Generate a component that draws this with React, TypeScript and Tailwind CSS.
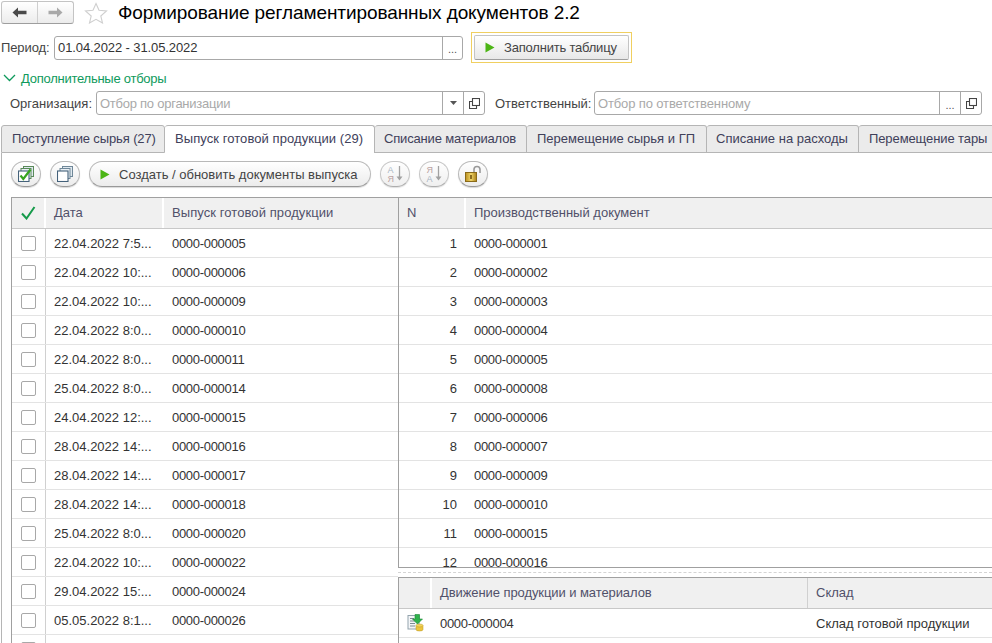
import React from "react";

const leftRows = [
  ["22.04.2022 7:5...", "0000-000005"],
  ["22.04.2022 10:...", "0000-000006"],
  ["22.04.2022 10:...", "0000-000009"],
  ["22.04.2022 8:0...", "0000-000010"],
  ["22.04.2022 8:0...", "0000-000011"],
  ["25.04.2022 8:0...", "0000-000014"],
  ["24.04.2022 12:...", "0000-000015"],
  ["28.04.2022 14:...", "0000-000016"],
  ["28.04.2022 14:...", "0000-000017"],
  ["28.04.2022 14:...", "0000-000018"],
  ["25.04.2022 8:0...", "0000-000020"],
  ["22.04.2022 10:...", "0000-000022"],
  ["29.04.2022 15:...", "0000-000024"],
  ["05.05.2022 8:1...", "0000-000026"],
  ["", ""],
];
const rightRows = ["000001","000002","000003","000004","000005","000008","000006","000007","000009","000010","000015","000016"];

function Copy() {
  return (
    <svg width="11" height="11" viewBox="0 0 11 11" fill="none" stroke="#444" strokeWidth="1.1">
      <rect x="3.500" y="0.500" width="7" height="7" fill="#fff" />
      <path d="M3.500 3.500H0.500V10.500H7.500V7.500" />
    </svg>
  );
}

function Seg({ children, w }: { children: React.ReactNode; w: string }) {
  return <div className={`${w} h-full border-l border-[#a8a8a8] flex items-center justify-center shrink-0`}>{children}</div>;
}

function Dots() {
  return <span className="text-[#555] text-[11px] leading-none relative top-[2px]">...</span>;
}

function Play() {
  return (
    <svg width="10" height="11" viewBox="0 0 10 11" className="shrink-0"><path d="M0.500 0.500 9.500 5.500 0.500 10.500z" fill="#4cb515" /></svg>
  );
}

function Round({ className = "", children }: { className?: string; children?: React.ReactNode }) {
  return (
    <div className={`w-[30px] h-[26px] rounded-full border border-[#b9b9b9] border-b-[#999] bg-gradient-to-b from-white to-[#ececec] shadow-[0_1px_1px_rgba(0,0,0,0.15)] flex items-center justify-center shrink-0 ${className}`}>
      {children}
    </div>
  );
}

function Stack({ check = false }: { check?: boolean }) {
  return (
    <svg width="16" height="16" viewBox="0 0 16 16" fill="none">
      <rect x="5.500" y="0.500" width="10" height="10" fill="#dfe8ef" stroke={check ? "#5a8a5a" : "#6f8798"} />
      <rect x="3" y="2.500" width="10" height="10" fill="#e9eff4" stroke={check ? "#5a8a5a" : "#6f8798"} />
      <rect x="0.500" y="5" width="10.500" height="10.500" fill="#fff" stroke="#44617a" strokeWidth="1.100" />
      {check && <path d="M2.500 9.500 5.300 13 12.500 3.500" stroke="#36a51f" strokeWidth="2.200" />}
    </svg>
  );
}

function Sort({ flip = false }: { flip?: boolean }) {
  const pink = "#a98a8a";
  const blue = "#94a3b3";
  return (
    <svg width="19" height="18" viewBox="0 0 19 18" fill="none">
      <text x="1.500" y="8" fontSize="9" fontFamily="Liberation Sans, sans-serif" fill={flip ? pink : blue}>{flip ? "Я" : "А"}</text>
      <text x="1.500" y="16.500" fontSize="9" fontFamily="Liberation Sans, sans-serif" fill={flip ? blue : pink}>{flip ? "А" : "Я"}</text>
      <path d="M13.500 1V12" stroke="#8a8a8a" strokeWidth="1.300" />
      <path d="M10.500 11.500H16.500L13.500 15.500z" fill="#8a8a8a" />
    </svg>
  );
}

function Lock() {
  return (
    <svg width="20" height="20" viewBox="0 0 20 20" fill="none">
      <path d="M11 9V5.500Q11 2.500 14 2.500T17 5.500V9" stroke="#9a9a9a" strokeWidth="1.600" />
      <defs>
        <linearGradient id="lk" x1="0" x2="1" y1="0" y2="0">
          <stop offset="0" stopColor="#b98f1f" />
          <stop offset="0.500" stopColor="#f2d76a" />
          <stop offset="1" stopColor="#a9801a" />
        </linearGradient>
      </defs>
      <rect x="2.500" y="8.500" width="11" height="9" fill="url(#lk)" stroke="#8a6a18" />
      <rect x="7" y="11" width="2" height="4" fill="#8a6c20" />
    </svg>
  );
}

function DocIcon() {
  return (
    <svg width="17" height="18" viewBox="0 0 17 18" fill="none">
      <rect x="1" y="1.500" width="11" height="13.500" fill="#f4f6f8" stroke="#93a3ad" />
      <path d="M3 4.500H7M3 7H8M3 9.500H8M3 12H8" stroke="#7b8b95" />
      <path d="M8 0.500H12.500V5H15.500L10.500 10 5.500 5H8z" fill="#2fb24c" stroke="#1d8a35" strokeWidth="0.600" />
      <path d="M9 11.500V15.500Q9 17 12.500 17T16 15.500V11.500z" fill="#ecc53d" stroke="#b8962a" strokeWidth="0.500" />
      <ellipse cx="12.500" cy="11.500" rx="3.500" ry="1.500" fill="#f3d35a" stroke="#b8962a" strokeWidth="0.500" />
    </svg>
  );
}

const tabs = [
  { t: "Поступление сырья (27)", w: "w-[164px]", p: "pl-[10px] tracking-[-0.12px]" },
  { t: "Выпуск готовой продукции (29)", w: "w-[210px]", p: "pl-[10px] tracking-[0.07px]", active: true },
  { t: "Списание материалов", w: "w-[152px]", p: "pl-[9px] tracking-[-0.17px]" },
  { t: "Перемещение сырья и ГП", w: "w-[180px]", p: "pl-[10px]" },
  { t: "Списание на расходы", w: "w-[152px]", p: "pl-[9px]" },
  { t: "Перемещение тары", w: "w-[140px]", p: "pl-[10px] tracking-[-0.1px]" },
];

export default function App() {
  return (
    <div className="w-[992px] h-[643px] overflow-hidden bg-white font-['Liberation_Sans',Arial,sans-serif] text-[13px] text-[#3a3a3a] leading-none">
      {/* title */}
      <div className="flex items-center h-[23px] mt-[1px] pl-[1px]">
        <div className="w-[73px] h-[23px] flex rounded-[3px] border border-[#c4c4c4] border-b-[#9e9e9e] bg-gradient-to-b from-white to-[#ececec] shrink-0">
          <div className="w-[36px] flex items-center justify-center border-r border-[#cfcfcf]">
            <svg width="15" height="11" viewBox="0 0 15 11"><path d="M0.500 5.500 6 0.500V3.800H14.500V7.200H6V10.500z" fill="#4a4a4a" /></svg>
          </div>
          <div className="flex-1 flex items-center justify-center">
            <svg width="15" height="11" viewBox="0 0 15 11"><path d="M14.500 5.500 9 0.500V3.800H0.500V7.200H9V10.500z" fill="#a9a9a9" /></svg>
          </div>
        </div>
        <svg className="ml-[10px] shrink-0" width="24" height="22" viewBox="0 0 24 22" fill="none">
          <path d="M12 1.500 15 8.300 22.500 9 16.800 14 18.500 21 12 17.300 5.500 21 7.200 14 1.500 9 9 8.300z" stroke="#cfcfcf" strokeWidth="1.100" fill="#fff" />
        </svg>
        <h1 className="ml-[10px] text-[19px] tracking-[-0.09px] font-normal text-black whitespace-nowrap leading-none">Формирование регламентированных документов 2.2</h1>
      </div>

      {/* period */}
      <div className="flex items-center h-[31px] mt-[8px] pl-[1px]">
        <span className="w-[53px] shrink-0 text-[#444] tracking-[-0.1px]">Период:</span>
        <div className="w-[409px] h-[24px] flex border border-[#a8a8a8] rounded-[3px] shrink-0">
          <div className="flex-1 flex items-center pl-[3px] pb-[1px] text-[#333] tracking-[-0.1px]">01.04.2022 - 31.05.2022</div>
          <Seg w="w-[20px]"><Dots /></Seg>
        </div>
        <div className="ml-[8px] w-[161px] h-[31px] border border-[#f0cf60] p-[2px] shrink-0">
          <div className="h-full rounded-[2px] border border-[#c4c4c4] border-b-[#9e9e9e] bg-gradient-to-b from-white to-[#e8e8e8] flex items-center pl-[10px]">
            <Play />
            <span className="ml-[9px] text-[#444] tracking-[-0.2px]">Заполнить таблицу</span>
          </div>
        </div>
      </div>

      {/* filters header */}
      <div className="flex items-center h-[14px] mt-[8px] pl-[3px] text-[#0e9a5c]">
        <svg width="13" height="8" viewBox="0 0 13 8" fill="none"><path d="M1 1 6.500 6.500 12 1" stroke="#0e9a5c" strokeWidth="1.300" /></svg>
        <span className="ml-[5px] tracking-[-0.25px]">Дополнительные отборы</span>
      </div>

      {/* filters */}
      <div className="flex items-center h-[24px] mt-[6px] pl-[10px]">
        <span className="w-[86px] shrink-0 text-[#444]">Организация:</span>
        <div className="w-[389px] h-full flex border border-[#a8a8a8] rounded-[3px] shrink-0">
          <div className="flex-1 flex items-center pl-[3px] text-[#a9a9a9] tracking-[-0.25px]">Отбор по организации</div>
          <Seg w="w-[21px]"><svg width="7" height="4" viewBox="0 0 7 4"><path d="M0 0H7L3.500 4z" fill="#555" /></svg></Seg>
          <Seg w="w-[21px]"><Copy /></Seg>
        </div>
        <span className="ml-[10px] w-[99px] shrink-0 text-[#444]">Ответственный:</span>
        <div className="w-[388px] h-full flex border border-[#a8a8a8] rounded-[3px] shrink-0">
          <div className="flex-1 flex items-center pl-[3px] text-[#a9a9a9] tracking-[-0.13px]">Отбор по ответственному</div>
          <Seg w="w-[21px]"><Dots /></Seg>
          <Seg w="w-[21px]"><Copy /></Seg>
        </div>
      </div>

      {/* tabs */}
      <div className="flex h-[28px] mt-[10px] pl-[1px] w-[1050px]">
        {tabs.map((t) => (
          <div
            key={t.t}
            className={`${t.w} ${t.p} pb-[2px] shrink-0 flex items-center whitespace-nowrap border-t border-r border-[#b5b5b5] rounded-t-[3px] text-[#40405a] ${
              t.active ? "bg-white" : "bg-[#ebebeb] border-b"
            } ${t.t.startsWith("Поступ") ? "border-l" : ""}`}
          >
            {t.t}
          </div>
        ))}
      </div>

      {/* page */}
      <div className="ml-[1px] h-[491px] border-l border-[#b5b5b5] pl-[9px] overflow-hidden">
        {/* toolbar */}
        <div className="flex items-center gap-[9px] h-[26px] mt-[8px]">
          <Round><Stack check /></Round>
          <Round><Stack /></Round>
          <div className="w-[282px] h-[26px] rounded-full border border-[#b9b9b9] border-b-[#999] bg-gradient-to-b from-white to-[#ececec] shadow-[0_1px_1px_rgba(0,0,0,0.15)] flex items-center pl-[10px] shrink-0">
            <Play />
            <span className="ml-[9px] text-[#444]">Создать / обновить документы выпуска</span>
          </div>
          <Round className="opacity-80"><Sort /></Round>
          <Round className="opacity-80"><Sort flip /></Round>
          <Round><Lock /></Round>
        </div>

        {/* tables */}
        <div className="flex mt-[10px] h-[446px]">
          {/* left */}
          <div className="w-[387px] shrink-0 border-l border-t border-[#a0a0a0] overflow-hidden">
            <div className="flex h-[31px] bg-[#f0f0f0] border-b border-[#c8c8c8] text-[#50506a]">
              <div className="w-[34px] border-r-2 border-white flex items-center justify-center shrink-0">
                <svg width="15" height="14" viewBox="0 0 15 14" fill="none"><path d="M1 7.500 5.500 12.500 13.500 1" stroke="#159a4a" strokeWidth="2" /></svg>
              </div>
              <div className="w-[118px] border-r-2 border-white flex items-center pl-[8px] pb-[2px] shrink-0">Дата</div>
              <div className="flex-1 flex items-center pl-[8px] pb-[2px] tracking-[0.08px]">Выпуск готовой продукции</div>
            </div>
            {leftRows.map((r, i) => (
              <div key={i} className="flex h-[29px] border-b border-[#e3e3e3] text-[#333]">
                <div className="w-[34px] border-r border-[#d0d0d0] flex items-center justify-center shrink-0">
                  <div className="w-[15px] h-[15px] border border-[#a8a8a8] rounded-[2px] bg-white" />
                </div>
                <div className="w-[118px] flex items-center pl-[8px] whitespace-nowrap shrink-0">{r[0]}</div>
                <div className="flex-1 flex items-center pl-[8px] tracking-[-0.3px]">{r[1]}</div>
              </div>
            ))}
          </div>

          {/* right */}
          <div className="flex-1 min-w-0 flex flex-col">
            <div className="h-[371px] border-l border-t border-b border-[#a0a0a0] overflow-hidden shrink-0">
              <div className="flex h-[31px] bg-[#f0f0f0] border-b border-[#c8c8c8] text-[#50506a]">
                <div className="w-[67px] border-r-2 border-white flex items-center pl-[8px] pb-[2px] shrink-0">N</div>
                <div className="flex-1 flex items-center pl-[8px] pb-[2px]">Производственный документ</div>
              </div>
              {rightRows.map((r, i) => (
                <div key={r} className="flex h-[29px] border-b border-[#e3e3e3] text-[#333] shrink-0">
                  <div className="w-[58px] flex items-center justify-end shrink-0">{i + 1}</div>
                  <div className="flex-1 flex items-center pl-[17px] tracking-[-0.3px]">0000-{r}</div>
                </div>
              ))}
            </div>
            <div className="h-[9px] flex items-center shrink-0">
              <div className="w-full border-t border-dashed border-[#d4d4d4]" />
            </div>
            <div className="flex-1 border-l border-t border-[#a0a0a0] overflow-hidden">
              <div className="flex h-[31px] bg-[#f0f0f0] border-b border-[#c8c8c8] text-[#50506a]">
                <div className="w-[33px] border-r-2 border-white shrink-0" />
                <div className="w-[376px] border-r border-[#d0d0d0] flex items-center pl-[8px] pb-[2px] shrink-0 tracking-[-0.08px]">Движение продукции и материалов</div>
                <div className="flex-1 flex items-center pl-[8px] pb-[2px]">Склад</div>
              </div>
              <div className="flex h-[29px] border-b border-[#e3e3e3] text-[#333]">
                <div className="w-[33px] flex items-center justify-center shrink-0"><DocIcon /></div>
                <div className="w-[376px] flex items-center pl-[8px] shrink-0 tracking-[-0.3px]">0000-000004</div>
                <div className="flex-1 flex items-center pl-[8px] whitespace-nowrap">Склад готовой продукции</div>
              </div>
            </div>
          </div>
        </div>
      </div>
    </div>
  );
}
